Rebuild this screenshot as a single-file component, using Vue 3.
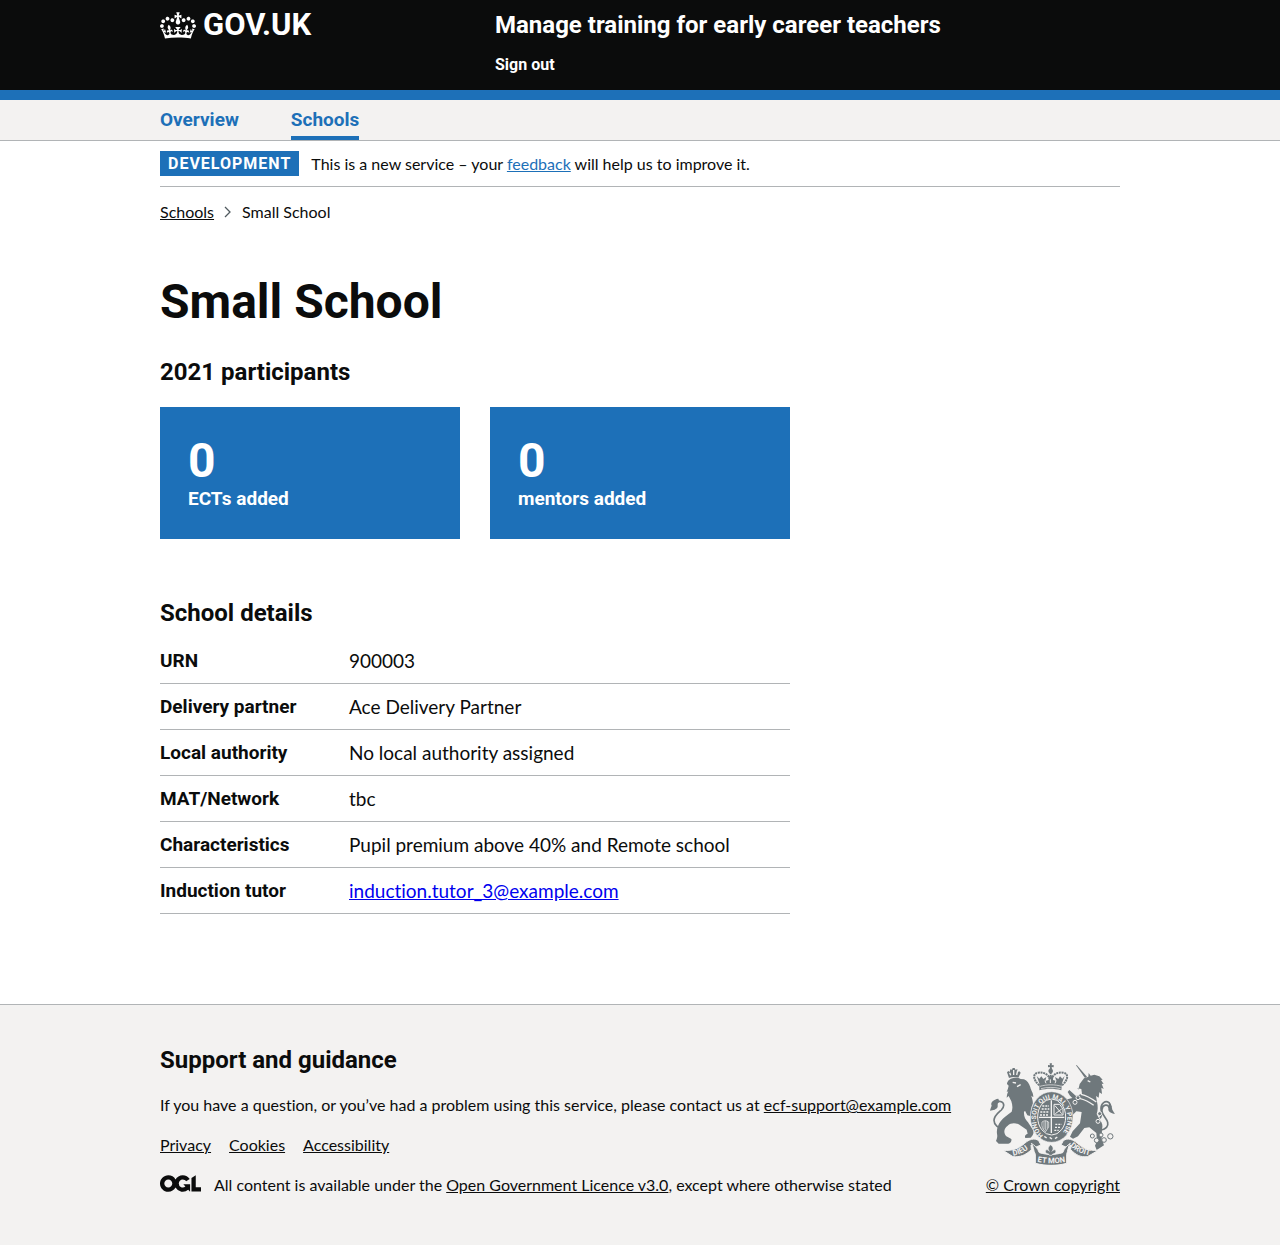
<script setup>
const details = [
  { key: 'URN', value: '900003' },
  { key: 'Delivery partner', value: 'Ace Delivery Partner' },
  { key: 'Local authority', value: 'No local authority assigned' },
  { key: 'MAT/Network', value: 'tbc' },
  { key: 'Characteristics', value: 'Pupil premium above 40% and Remote school' },
  { key: 'Induction tutor', value: 'induction.tutor_3@example.com', link: true },
]
const stats = [
  { count: 0, label: 'ECTs added' },
  { count: 0, label: 'mentors added' },
]
</script>

<template>
  <div class="page">
    <header class="header">
      <div class="container header-row">
        <div class="header-logo">
          <a href="#" class="logo-link">
            <svg class="crown" viewBox="0 0 132 97" aria-hidden="true">
              <path fill="currentColor" fill-rule="evenodd" d="M25 30.2c3.5 1.5 7.7-.2 9.1-3.7 1.5-3.6-.2-7.8-3.9-9.2-3.6-1.4-7.6.3-9.1 3.9-1.4 3.5.3 7.5 3.9 9zM9 39.5c3.6 1.5 7.8-.2 9.2-3.7 1.5-3.6-.2-7.8-3.9-9.1-3.6-1.5-7.6.2-9.1 3.8-1.4 3.5.3 7.5 3.8 9zM4.4 57.2c3.5 1.5 7.7-.2 9.1-3.8 1.5-3.6-.2-7.7-3.9-9.1-3.5-1.5-7.6.3-9.1 3.8-1.4 3.5.3 7.6 3.9 9.1zm38.3-21.4c3.5 1.5 7.7-.2 9.1-3.8 1.5-3.6-.2-7.7-3.9-9.1-3.6-1.5-7.6.3-9.1 3.8-1.3 3.6.4 7.7 3.9 9.1zm64.4-5.6c-3.6 1.5-7.8-.2-9.1-3.7-1.5-3.6.2-7.8 3.8-9.2 3.6-1.4 7.7.3 9.2 3.9 1.3 3.5-.4 7.5-3.9 9zm15.9 9.3c-3.6 1.5-7.7-.2-9.1-3.7-1.5-3.6.2-7.8 3.7-9.1 3.6-1.5 7.7.2 9.2 3.8 1.5 3.5-.3 7.5-3.8 9zm4.7 17.7c-3.6 1.5-7.8-.2-9.2-3.8-1.5-3.6.2-7.7 3.9-9.1 3.6-1.5 7.7.3 9.2 3.8 1.3 3.5-.4 7.6-3.9 9.1zM89.3 35.8c-3.6 1.5-7.8-.2-9.2-3.8-1.4-3.6.2-7.7 3.9-9.1 3.6-1.5 7.7.3 9.2 3.8 1.4 3.6-.3 7.7-3.9 9.1zM69.7 17.7l8.9 4.7V9.3l-8.9 2.8c-.2-.3-.5-.6-.9-.9L72.4 0H59.6l3.5 11.2c-.3.3-.6.5-.9.9l-8.8-2.8v13.1l8.8-4.7c.3.3.6.7.9.9l-5 15.4v.1c-.2.8-.4 1.6-.4 2.4 0 4.1 3.1 7.5 7 8.1h.2c.3 0 .7.1 1 .1.4 0 .7 0 1-.1h.2c4-.6 7.1-4.1 7.1-8.1 0-.8-.1-1.7-.4-2.4V34l-5.1-15.4c.4-.2.7-.6 1-.9zM66 92.8c16.9 0 32.8 1.1 47.1 3.2 4-16.9 8.9-26.7 14-33.5l-9.6-3.4c1 4.9 1.1 7.2 0 10.2-1.5-1.4-3-4.3-4.2-8.7L108.6 76c2.8-2 5-3.2 7.5-3.3-4.4 9.4-10 11.9-13.6 11.2-4.3-.8-6.3-4.6-5.6-7.9 1-4.7 5.7-5.9 8-.5 4.3-8.7-3-11.4-7.6-8.8 7.1-7.2 7.9-13.5 2.1-21.1-8 6.1-8.1 12.3-4.5 20.8-4.7-5.4-12.1-2.5-9.5 6.2 3.4-5.2 7.9-2 7.2 3.1-.6 4.3-6.4 7.8-13.5 7.2-10.3-.9-10.9-8-11.2-13.8 2.5-.5 7.1 1.8 11 7.3L80.2 60c-4.1 4.4-8 5.3-12.3 5.4 1.4-4.4 8-11.6 8-11.6H55.5s6.4 7.2 7.9 11.6c-4.2-.1-8-1-12.3-5.4l1.4 16.4c3.9-5.5 8.5-7.7 10.9-7.3-.3 5.8-.9 12.8-11.1 13.8-7.2.6-12.9-2.9-13.5-7.2-.7-5 3.8-8.3 7.1-3.1 2.7-8.7-4.6-11.6-9.4-6.2 3.7-8.5 3.6-14.7-4.6-20.8-5.8 7.6-5 13.9 2.2 21.1-4.7-2.6-11.9.1-7.7 8.8 2.3-5.5 7.1-4.2 8.1.5.7 3.3-1.3 7.1-5.7 7.9-3.5.7-9-1.8-13.5-11.2 2.5.1 4.7 1.3 7.5 3.3l-4.7-15.4c-1.2 4.4-2.7 7.2-4.3 8.7-1.1-3-.9-5.3 0-10.2l-9.5 3.4c5 6.9 9.9 16.7 14 33.5 14.8-2.1 30.8-3.2 47.7-3.2z" />
            </svg>
            <span>GOV.UK</span>
          </a>
        </div>
        <div class="header-content">
          <a href="#" class="service-name">Manage training for early career teachers</a>
          <a href="#" class="sign-out">Sign out</a>
        </div>
      </div>
    </header>

    <nav class="primary-nav" aria-label="Primary">
      <div class="container nav-row">
        <a href="#">Overview</a>
        <a href="#" class="current" aria-current="page">Schools</a>
      </div>
    </nav>

    <div class="container">
      <div class="phase-banner">
        <strong class="tag">DEVELOPMENT</strong>
        <span>This is a new service – your <a href="#" class="blue-link">feedback</a> will help us to improve it.</span>
      </div>

      <nav class="breadcrumbs" aria-label="Breadcrumb">
        <a href="#">Schools</a>
        <svg class="chevron" viewBox="0 0 8 12" aria-hidden="true"><path d="M1 1l5 5-5 5" fill="none" stroke="#505a5f" stroke-width="1.3" /></svg>
        <span>Small School</span>
      </nav>

      <main class="main">
        <h1>Small School</h1>
        <h2>2021 participants</h2>
        <div class="cards">
          <div v-for="s in stats" :key="s.label" class="card">
            <span class="count">{{ s.count }}</span>
            <span class="label">{{ s.label }}</span>
          </div>
        </div>

        <h2>School details</h2>
        <dl class="summary">
          <div v-for="d in details" :key="d.key" class="row">
            <dt>{{ d.key }}</dt>
            <dd>
              <a v-if="d.link" href="mailto:induction.tutor_3@example.com">{{ d.value }}</a>
              <template v-else>{{ d.value }}</template>
            </dd>
          </div>
        </dl>
      </main>
    </div>

    <footer class="footer">
      <div class="container footer-row">
        <div class="footer-main">
          <h2>Support and guidance</h2>
          <p>If you have a question, or you’ve had a problem using this service, please contact us at <a href="mailto:ecf-support@example.com">ecf-support@example.com</a></p>
          <div class="footer-links">
            <a href="#">Privacy</a>
            <a href="#">Cookies</a>
            <a href="#">Accessibility</a>
          </div>
          <div class="licence">
            <svg class="ogl" viewBox="0 0 483.2 195.7" aria-hidden="true">
              <path fill="currentColor" d="M421.5 142.8V.1l-50.7 32.3v161.1h112.4v-50.7zm-122.3-9.6A47.12 47.12 0 0 1 221 97.8c0-26 21.1-47.1 47.1-47.1 16.7 0 31.4 8.7 39.7 21.8l42.7-27.2A97.63 97.63 0 0 0 268.1 0c-36.5 0-68.3 20.1-85.1 49.7A98 98 0 0 0 97.8 0C43.9 0 0 43.9 0 97.8s43.9 97.8 97.8 97.8c36.5 0 68.3-20.1 85.1-49.7a97.76 97.76 0 0 0 149.6 25.4l19.4 22.2h3v-87.8h-80l24.3 27.5zM97.8 145c-26 0-47.1-21.1-47.1-47.1s21.1-47.1 47.1-47.1 47.1 21.1 47.1 47.1S123.8 145 97.8 145" />
            </svg>
            <span>All content is available under the <a href="#">Open Government Licence v3.0</a>, except where otherwise stated</span>
          </div>
        </div>
        <div class="copyright">
          <svg class="crest" viewBox="36 38 375 306" role="img" aria-label="Royal coat of arms">
            <!-- lion -->
            <g fill="#6f787c">
              <path d="M93 83l-6-17 4-4 4 3 2-8 5 1 2-5h6l2 5 6-1 1 8 5-2 4 4-7 15c-9-3-19-3-28 1z" />
              <path d="M94 88c10-7 26-7 34-2l10 1c10 4 15 12 19 24 2 10 9 16 9 29-3-1-4-3-6-4 2 9 6 17 4 26-5 10-6 24-5 36l-11-3-7-14-3 4c-1 13 4 23 12 31l15 23c3 8 1 16-7 23l-16 1c-3-6 0-10 7-13l-3-12-24-16c-12-5-24-4-33 4-12 9-13 22-4 32l15 8c2 6-3 13-9 14H62l-8-8c3-7 5-12 3-22-2-12 3-27 11-37 9-13 21-19 33-29 4-12 2-21-1-31l-8-16-6 5c1-9 2-13 5-19l-5 2c3-7 5-13 6-19l-5-5c0-5 3-10 7-13z" />
            </g>
            <path d="M76 237c-15-3-28-13-28-27 0-13 12-22 22-31 9-9 10-21 0-25-8-3-18 2-19 10" fill="none" stroke="#6f787c" stroke-width="5" />
            <path d="M61 145c-14 2-25 11-20 21-2 6-4 9-5 15 9-1 21-4 23-12 1-7-2-9 5-15z" fill="#6f787c" />
            <path d="M95 67l3 8m9-16v15m12-14l-3 14M104 96l10 2M117 109l11-6" stroke="#f3f2f1" stroke-width="4" fill="none" />

            <!-- unicorn -->
            <path d="M294 45l27 38 6-4-31-35z" fill="#6f787c" />
            <g fill="#6f787c">
              <path d="M301 118l4-17 13-17 13-5 1-11 6 8 11-3 15 5 10 10-5 1 8 12-6-1 6 16-7-4 2 19-8-5-2 16-8-5 3 17c3 12 3 27-1 37l10 19c7 8 9 17 6 26l-1 30 7 19-22 14-5-13 6-15-2-23-21-17-15 2-19 25-15 7-9-6 8-16 22-24 3-20 2-14-16-2-16 16-8-4 5-19-9-16-8-3-4 4c-7-5-11-12-11-18 8 0 17 0 24 4l15-4-7-7-7-11 5-6 20 18 18-7-2-14-12-2z" />
            </g>
            <path d="M366 204c8-11 3-20 3-30 0-15 13-25 24-17 9 8 3 22 12 30M370 239c13-2 22-11 19-23-3-13-20-24-17-39 2-14 18-18 22-4" fill="none" stroke="#6f787c" stroke-width="5" />
            <path d="M393 155l8 13-2 8 12 14c-12 0-21-7-20-15z" fill="#6f787c" />
            <path d="M309 132c14 3 27 9 46 23m-51-11c17 4 29 10 43 21M329 91l8 4" fill="none" stroke="#f3f2f1" stroke-width="4" />
            <g fill="#6f787c" stroke="#f3f2f1" stroke-width="3">
              <circle cx="300" cy="142" r="6" /><circle cx="291" cy="156" r="6" /><circle cx="365" cy="190" r="6" /><circle cx="360" cy="213" r="6" />
            </g>
            <g fill="#f3f2f1" stroke="#6f787c" stroke-width="3">
              <circle cx="343" cy="257" r="6" /><circle cx="356" cy="270" r="7" /><circle cx="378" cy="269" r="7" /><circle cx="397" cy="258" r="8" /><circle cx="369" cy="254" r="6" />
            </g>

            <!-- imperial crown -->
            <g fill="#6f787c">
              <path d="M215 39h7l-1 6 6-1v7l-6-1 1 6h-7l1-6-6 1v-7l6 1z" />
              <circle cx="218" cy="62" r="7" />
              <path d="M184 99l-8-22 8 8 6-7 6 8 9-6-3 12 10-3-1-11h15l-1 11 10 3-4-12 10 6 5-8 7 7 7-8-8 22-2 21c-24-6-42-6-66 0z" />
            </g>
            <path d="M184 105c-18-15-22-35-3-38 15-2 29 4 34 18M252 105c18-15 22-35 3-38-15-2-29 4-34 18M218 65v22" fill="none" stroke="#6f787c" stroke-width="6" stroke-dasharray="6 2" />
            <path d="M186 108c20-6 45-6 65 0M189 115c18-5 41-5 59 0" fill="none" stroke="#f3f2f1" stroke-width="2" />
            <path d="M201 91l3 8m13-12v11m17-7l-3 8" stroke="#f3f2f1" stroke-width="3" />

            <!-- garter and shield -->
            <ellipse cx="221" cy="200" rx="64" ry="76" fill="#6f787c" stroke="#f3f2f1" stroke-width="2" />
            <ellipse cx="221" cy="200" rx="42" ry="54" fill="none" stroke="#f3f2f1" stroke-width="3" />
            <path id="garter-arc" d="M196 255a47 59 0 1 1 50 0" fill="none" />
            <text class="crest-text"><textPath href="#garter-arc">HONI·SOIT QUI MAL Y PENSE</textPath></text>
            <path d="M183 201h76M220 150v98" stroke="#f3f2f1" stroke-width="4" />
            <path d="M193 167h20m-22 9h23m-27 9h26m-27 9h27M232 222h19m-20 9h17m-19 9h13" stroke="#f3f2f1" stroke-width="4" stroke-dasharray="6 3" />
            <path d="M228 162h17l10 14v18h-27zM231 166l20 24m0-14l-19 14" fill="none" stroke="#f3f2f1" stroke-width="3" />
            <path d="M192 215c7-5 12-5 20 0v15l-9 14c-9-6-13-15-11-29zM198 213v24m5-26v29m5-28v22" fill="none" stroke="#f3f2f1" stroke-width="2" />
            <path d="M199 258l7 5m9-2l7 5m9-1l7-5" stroke="#f3f2f1" stroke-width="4" />

            <!-- motto ribbon -->
            <g fill="#6f787c" stroke="#f3f2f1" stroke-width="3">
              <path d="M75 300c32 2 49-7 65-21 12-11 29-18 42-8l7 13-20 8-10-8 1 14c-17 17-35 23-55 21z" />
              <path d="M361 300c-32 2-46-7-63-21-12-11-29-18-42-8l-7 13 20 8 10-8-1 14c17 17 30 23 50 21z" />
              <path d="M160 279c7 10 6 22 12 33v27c31 8 64 8 94 0v-27c4-12 4-23 11-33-9 6-17 13-23 28-24 7-46 7-70 0-6-15-14-22-24-28z" />
            </g>
            <path d="M218 283c9 8 9 12 4 20 8-10 16-2 9 6-4 3-8 0-9 6h-8c-1-6-5-3-9-6-7-8 1-16 9-6-5-8-5-12 4-20z" fill="#6f787c" stroke="#f3f2f1" stroke-width="2" />
            <path id="dieu-arc" d="M106 316q33-5 56-31" fill="none" />
            <path id="mon-arc" d="M178 334q43 9 86 0" fill="none" />
            <path id="droit-arc" d="M276 287q24 23 65 29" fill="none" />
            <g class="crest-text motto">
              <text><textPath href="#dieu-arc">DIEU</textPath></text>
              <text><textPath href="#mon-arc">ET MON</textPath></text>
              <text><textPath href="#droit-arc">DROIT</textPath></text>
            </g>
          </svg>
          <a href="#">© Crown copyright</a>
        </div>
      </div>
    </footer>
  </div>
</template>

<style>
body {
  background: #fff;
}
</style>

<style scoped>
.page {
  font-family: Lato, "Liberation Sans", sans-serif;
  font-size: 16px;
  line-height: 20px;
  font-variant-ligatures: none;
  color: #0b0c0c;
}
.container {
  max-width: 960px;
  margin: 0 auto;
}
h1, h2, p, dl, dd {
  margin: 0;
}
h1, h2, dt, .tag, .header, .primary-nav, .card {
  font-family: Roboto, "Liberation Sans", sans-serif;
}
a {
  color: inherit;
}
.header {
  background: #0b0c0c;
  color: #fff;
  border-bottom: 10px solid #1d70b8;
}
.header a {
  text-decoration: none;
}
.header-row {
  display: flex;
  padding: 10px 0 15px;
}
.header-logo {
  flex: 0 0 335px;
}
.logo-link {
  display: flex;
  align-items: center;
  gap: 7px;
  font-size: 31px;
  line-height: 30px;
  font-weight: 700;
}
.crown {
  width: 36px;
  height: 27px;
}
.header-content {
  display: flex;
  flex-direction: column;
  align-items: flex-start;
  gap: 15px;
  font-weight: 700;
}
.service-name {
  font-size: 24px;
  line-height: 30px;
}
.primary-nav {
  background: #f3f2f1;
  border-bottom: 1px solid #b1b4b6;
}
.nav-row {
  display: flex;
  gap: 52px;
}
.nav-row a {
  color: #1d70b8;
  font-size: 19px;
  line-height: 40px;
  font-weight: 700;
  text-decoration: none;
}
.nav-row .current {
  box-shadow: inset 0 -4px #1d70b8;
}
.phase-banner {
  display: flex;
  align-items: center;
  gap: 12px;
  padding: 10px 0;
  border-bottom: 1px solid #b1b4b6;
}
.tag {
  background: #1d70b8;
  color: #fff;
  padding: 0 8px;
  line-height: 25px;
  letter-spacing: 1px;
}
.blue-link {
  color: #1d70b8;
}
.breadcrumbs {
  display: flex;
  align-items: center;
  gap: 10px;
  margin-top: 15px;
}
.chevron {
  width: 8px;
  height: 12px;
}
.main {
  max-width: 630px;
  padding: 55px 0 90px;
}
h1 {
  font-size: 48px;
  line-height: 50px;
  margin-bottom: 30px;
}
h2 {
  font-size: 24px;
  line-height: 30px;
}
.cards {
  display: grid;
  grid-template-columns: 1fr 1fr;
  gap: 30px;
  margin: 20px 0 59px;
}
.card {
  background: #1d70b8;
  color: #fff;
  font-weight: 700;
  padding: 28px;
}
.count {
  display: block;
  font-size: 48px;
  line-height: 52px;
}
.label {
  display: block;
  font-size: 19px;
  line-height: 24px;
}
.summary {
  margin-top: 10px;
  font-size: 19px;
  line-height: 25px;
}
.row {
  display: flex;
  padding: 10px 0;
  border-bottom: 1px solid #b1b4b6;
}
dt {
  flex: 0 0 30%;
  font-weight: 700;
}
dd a {
  color: #0000ee;
}
.footer {
  background: #f3f2f1;
  border-top: 1px solid #b1b4b6;
  padding: 40px 0 50px;
}
.footer-row {
  display: flex;
  justify-content: space-between;
  align-items: flex-end;
}
.footer-main {
  display: flex;
  flex-direction: column;
  gap: 20px;
}
.footer-links {
  display: flex;
  gap: 18px;
}
.licence {
  display: flex;
  align-items: flex-start;
  gap: 13px;
}
.ogl {
  width: 41px;
  height: 17px;
}
.copyright {
  display: flex;
  flex-direction: column;
  align-items: center;
  gap: 10px;
}
.crest {
  width: 125px;
  height: 102px;
}
.crest-text {
  font-family: Roboto, "Liberation Sans", sans-serif;
  font-size: 20px;
  font-weight: 700;
  fill: #f3f2f1;
}
.motto {
  font-size: 23px;
}
</style>
